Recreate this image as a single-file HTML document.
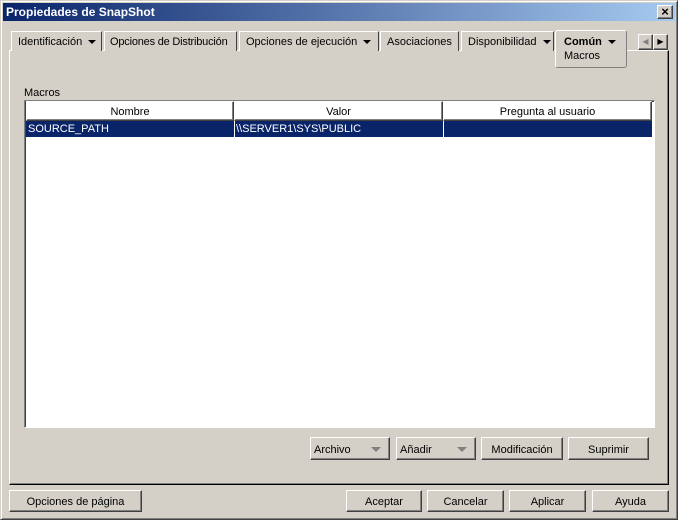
<!DOCTYPE html>
<html><head><meta charset="utf-8"><style>
*{box-sizing:border-box;margin:0;padding:0}
body{width:678px;height:520px;background:#d4d0c8;font-family:"Liberation Sans",sans-serif;font-size:11px;color:#000;position:relative;overflow:hidden}
.abs{position:absolute}
.win{left:0;top:0;width:678px;height:520px;border:1px solid;border-color:#d4d0c8 #404040 #404040 #d4d0c8;box-shadow:inset 1px 1px #fff,inset -1px -1px #808080}
.title{left:3px;top:3px;width:672px;height:18px;background:linear-gradient(90deg,#0a246a,#a6caf0);color:#fff;font-weight:bold;font-size:12px;line-height:19px;padding-left:3px}
.btn{position:absolute;background:#d4d0c8;border:1px solid;border-color:#fff #404040 #404040 #fff;box-shadow:inset -1px -1px #808080;text-align:center;line-height:22px}
.tab{position:absolute;top:31px;height:20px;border:1px solid;border-color:#fff #404040 transparent #fff;border-bottom:none;line-height:20px;padding-left:6px;background:#d4d0c8;white-space:nowrap;overflow:hidden}
.arr{display:inline-block;width:0;height:0;border-left:4px solid transparent;border-right:4px solid transparent;border-top:4px solid #000;vertical-align:middle;margin-left:6px}
.garr{position:absolute;right:8px;top:9px;width:0;height:0;border-left:5px solid transparent;border-right:5px solid transparent;border-top:5px solid #808080}
.hd{position:absolute;top:101px;height:20px;border:1px solid;border-color:#fff #404040 #404040 #fff;box-shadow:inset -1px -1px #808080;text-align:center;line-height:20px}
</style></head><body>
<div class="abs win"></div>
<div class="abs title">Propiedades de SnapShot</div>
<div class="btn" style="left:657px;top:5px;width:16px;height:14px;line-height:11px;font-size:13px;font-weight:bold">×</div>

<div class="abs" style="left:9px;top:50px;width:660px;height:435px;border:1px solid;border-color:#fff #000 #000 #fff;box-shadow:inset -1px -1px #808080"></div>

<div class="tab" style="left:11px;width:91px">Identificación<span class="arr"></span></div>
<div class="tab" style="left:104px;width:133px;letter-spacing:-0.2px;padding-left:5px">Opciones de Distribución</div>
<div class="tab" style="left:239px;width:140px">Opciones de ejecución<span class="arr"></span></div>
<div class="tab" style="left:380px;width:79px">Asociaciones</div>
<div class="tab" style="left:461px;width:93px">Disponibilidad<span class="arr"></span></div>
<div class="abs" style="left:555px;top:30px;width:72px;height:38px;border:1px solid;border-color:#fff #808080 #808080 #fff;border-radius:3px;background:#d4d0c8;padding-left:8px;line-height:22px"><b>Común</b><span class="arr"></span><div style="line-height:12px;margin-top:-3px">Macros</div></div>
<div class="btn" style="left:638px;top:34px;width:15px;height:16px;line-height:14px;font-size:8px;color:#808080">◀</div>
<div class="btn" style="left:653px;top:34px;width:15px;height:16px;line-height:14px;font-size:8px">▶</div>

<div class="abs" style="left:24px;top:87px">Macros</div>
<div class="abs" style="left:24px;top:100px;width:631px;height:328px;background:#fff;border:1px solid;border-color:#808080 #fff #fff #808080;box-shadow:inset 1px 1px #404040"></div>
<div class="hd" style="left:26px;width:208px">Nombre</div>
<div class="hd" style="left:234px;width:209px">Valor</div>
<div class="hd" style="left:443px;width:209px">Pregunta al usuario</div>
<div class="abs" style="left:26px;top:121px;width:626px;height:16px;background:#0a246a;color:#fff;line-height:17px">
<span class="abs" style="left:2px">SOURCE_PATH</span>
<span class="abs" style="left:208px;top:0;height:16px;border-left:1px solid #fff"></span>
<span class="abs" style="left:210px">\\SERVER1\SYS\PUBLIC</span>
<span class="abs" style="left:417px;top:0;height:16px;border-left:1px solid #fff"></span>
</div>

<div class="btn" style="left:310px;top:437px;width:80px;height:23px;text-align:left;padding-left:3px;line-height:24px">Archivo<span class="garr"></span></div>
<div class="btn" style="left:396px;top:437px;width:80px;height:23px;text-align:left;padding-left:3px;line-height:24px">Añadir<span class="garr"></span></div>
<div class="btn" style="left:481px;top:437px;width:82px;height:23px;line-height:24px">Modificación</div>
<div class="btn" style="left:568px;top:437px;width:81px;height:23px;line-height:24px">Suprimir</div>

<div class="btn" style="left:9px;top:490px;width:133px;height:22px">Opciones de página</div>
<div class="btn" style="left:346px;top:490px;width:76px;height:22px">Aceptar</div>
<div class="btn" style="left:427px;top:490px;width:77px;height:22px">Cancelar</div>
<div class="btn" style="left:509px;top:490px;width:77px;height:22px">Aplicar</div>
<div class="btn" style="left:592px;top:490px;width:77px;height:22px">Ayuda</div>
</body></html>
